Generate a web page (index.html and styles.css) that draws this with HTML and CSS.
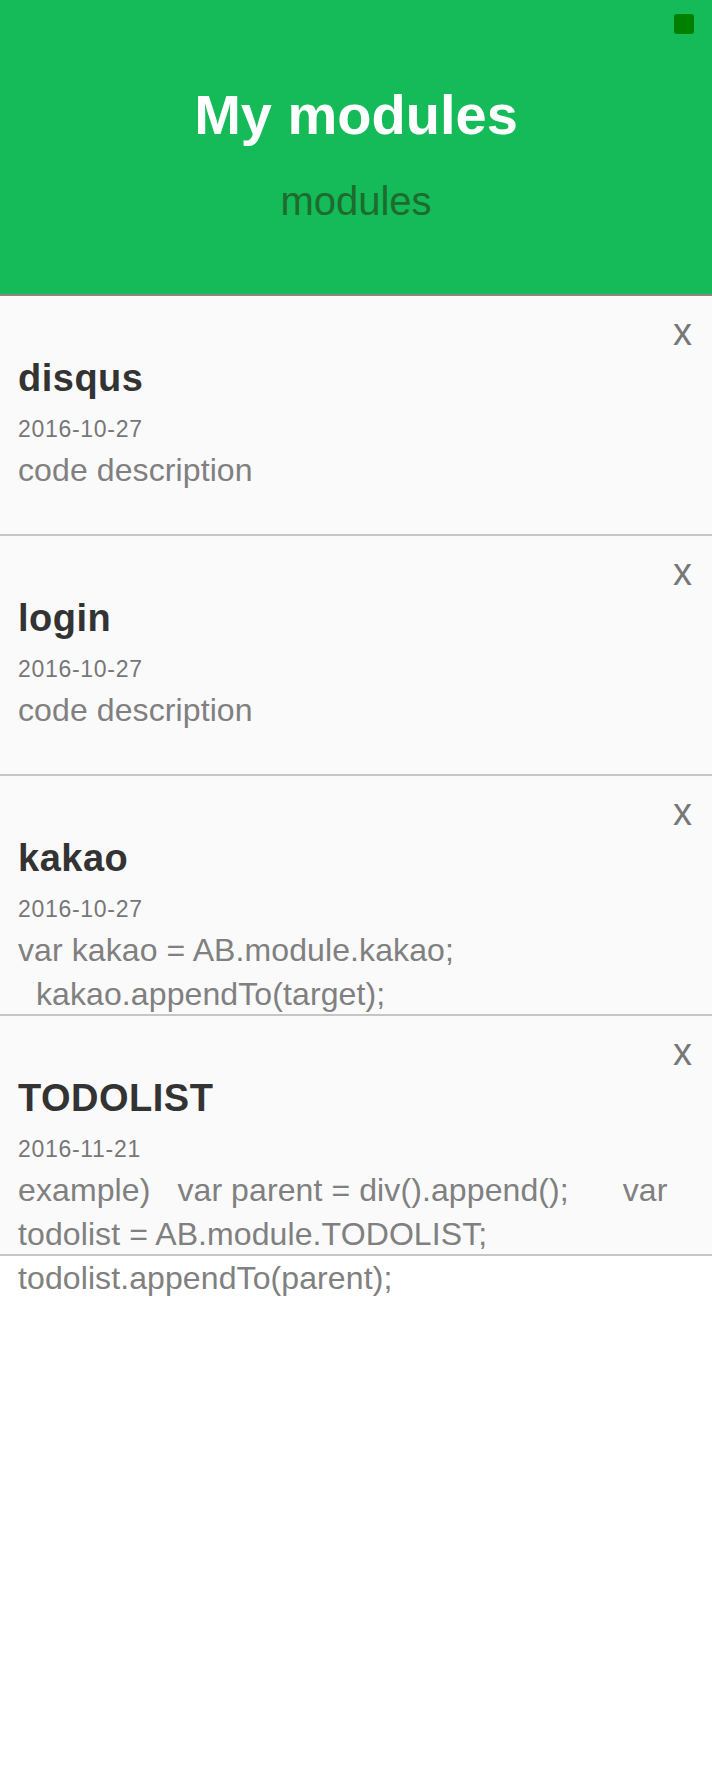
FILE: index.html
```html
<!DOCTYPE html>
<html>
<head>
<meta charset="utf-8">
<title>My modules</title>
<link rel="stylesheet" href="styles.css">
</head>
<body>
<header class="header">
  <span class="status"></span>
  <h1 class="title">My modules</h1>
  <p class="subtitle">modules</p>
</header>
<main class="list">
  <section class="card">
    <div class="card-top"><span class="close">x</span></div>
    <h2 class="name">disqus</h2>
    <div class="date">2016-10-27</div>
    <p class="desc">code description</p>
  </section>
  <section class="card">
    <div class="card-top"><span class="close">x</span></div>
    <h2 class="name">login</h2>
    <div class="date">2016-10-27</div>
    <p class="desc">code description</p>
  </section>
  <section class="card">
    <div class="card-top"><span class="close">x</span></div>
    <h2 class="name">kakao</h2>
    <div class="date">2016-10-27</div>
    <p class="desc">var kakao = AB.module.kakao;
  kakao.appendTo(target);</p>
  </section>
  <section class="card">
    <div class="card-top"><span class="close">x</span></div>
    <h2 class="name">TODOLIST</h2>
    <div class="date">2016-11-21</div>
    <p class="desc">example)   var parent = div().append();      var
todolist = AB.module.TODOLIST;
todolist.appendTo(parent);</p>
  </section>
</main>
</body>
</html>
```
FILE: styles.css
```css
html, body {
  margin: 0;
  padding: 0;
  background: #ffffff;
}
body {
  min-height: 100vh;
  font-family: "Liberation Sans", Arial, Helvetica, sans-serif;
}
.header {
  position: relative;
  box-sizing: border-box;
  height: 296px;
  padding-top: 83px;
  background: #14bb58;
  border-bottom: 2px solid #878787;
  text-align: center;
}
.status {
  position: absolute;
  top: 14px;
  right: 18px;
  width: 20px;
  height: 20px;
  border-radius: 3px;
  background: #008000;
}
.title {
  margin: 0;
  font-size: 56px;
  line-height: 64px;
  font-weight: bold;
  color: #ffffff;
}
.subtitle {
  margin: 30px 0 0;
  font-size: 40px;
  line-height: 48px;
  color: #1e6b2e;
}
.card {
  box-sizing: border-box;
  height: 240px;
  padding: 16px 20px 0 18px;
  background: #fafafa;
  border-bottom: 2px solid #c6c6c6;
}
.card-top {
  display: flex;
  justify-content: flex-end;
}
.close {
  font-size: 38px;
  line-height: 40px;
  color: #777777;
}
.name {
  margin: 4px 0 0;
  font-size: 38px;
  line-height: 44px;
  font-weight: bold;
  letter-spacing: 0.5px;
  color: #333333;
}
.date {
  margin-top: 14px;
  font-size: 23px;
  line-height: 30px;
  letter-spacing: 0.7px;
  color: #777777;
}
.desc {
  margin: 4px 0 0;
  font-size: 32px;
  line-height: 44px;
  letter-spacing: 0.1px;
  color: #808080;
  white-space: pre-wrap;
}
```
